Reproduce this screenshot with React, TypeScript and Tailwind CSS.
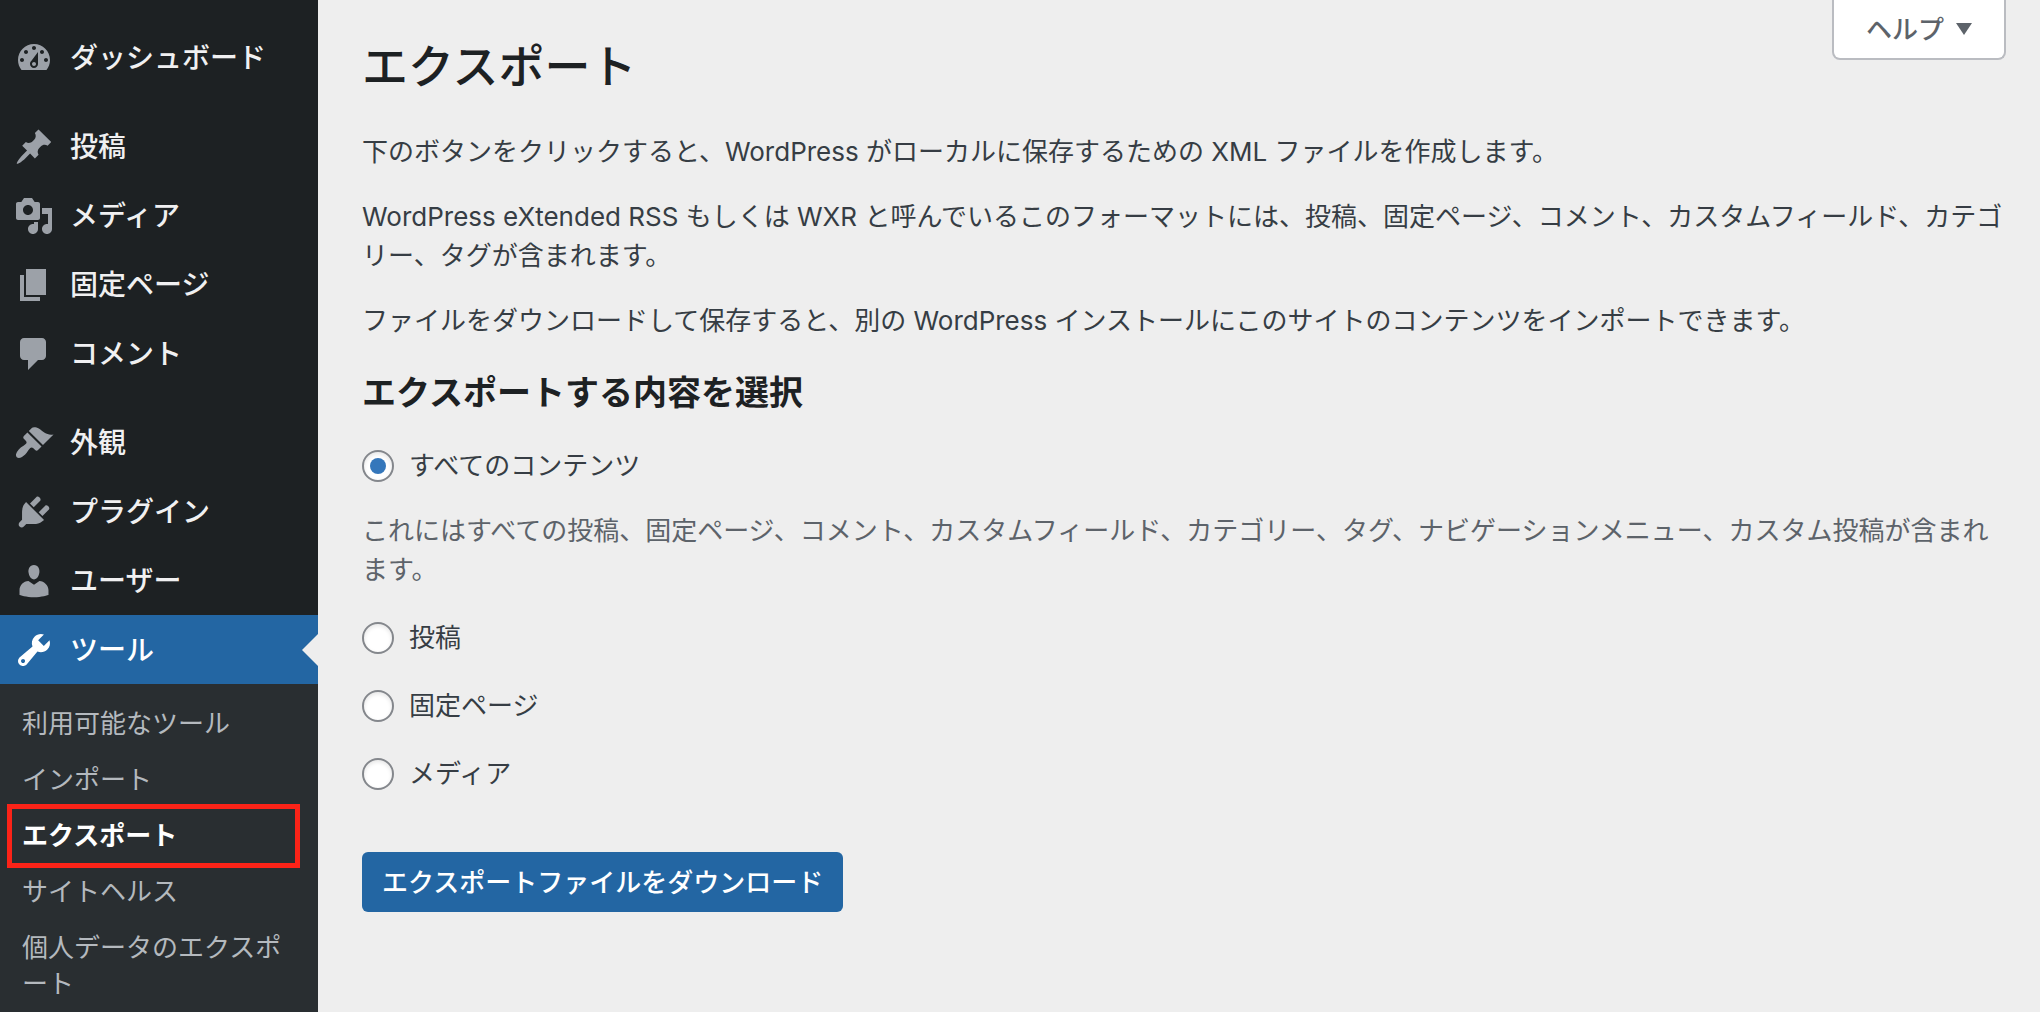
import { useState } from "react";

type MenuItem = { label: string; icon: string; current?: boolean };

const ICONS = {
  dashboard:
    "M3.76 16h12.48c1.1-1.37 1.76-3.11 1.76-5 0-4.42-3.58-8-8-8s-8 3.58-8 8c0 1.89.66 3.63 1.76 5zM10 4c.55 0 1 .45 1 1s-.45 1-1 1-1-.45-1-1 .45-1 1-1zM6 6c.55 0 1 .45 1 1s-.45 1-1 1-1-.45-1-1 .45-1 1-1zm8 0c.55 0 1 .45 1 1s-.45 1-1 1-1-.45-1-1 .45-1 1-1zm-5.37 5.55L12 7v6c0 1.1-.9 2-2 2s-2-.9-2-2c0-.57.24-1.08.63-1.45zM4 10c.55 0 1 .45 1 1s-.45 1-1 1-1-.45-1-1 .45-1 1-1zm12 0c.55 0 1 .45 1 1s-.45 1-1 1-1-.45-1-1 .45-1 1-1zm-5 3c0-.55-.45-1-1-1s-1 .45-1 1 .45 1 1 1 1-.45 1-1z",
  post: "M10.44 3.02l1.82-1.82 6.36 6.35-1.83 1.82c-1.05-.68-2.48-.57-3.41.36l-.75.75c-.92.93-1.04 2.35-.35 3.41l-1.83 1.82-2.41-2.41-2.8 2.79c-.42.42-3.38 2.71-3.8 2.29s1.86-3.39 2.28-3.81l2.79-2.79L4.1 9.36l1.83-1.82c1.05.69 2.48.57 3.4-.36l.75-.75c.93-.92 1.05-2.35.36-3.41z",
  media:
    "M13 11V4c0-.55-.45-1-1-1h-1.67L9 1H5L3.67 3H2c-.55 0-1 .45-1 1v7c0 .55.45 1 1 1h10c.55 0 1-.45 1-1zM7 4.5c1.38 0 2.5 1.12 2.5 2.5S8.38 9.5 7 9.5 4.5 8.38 4.5 7 5.62 4.5 7 4.5zM14 6h5v10.5c0 1.38-1.12 2.5-2.5 2.5S14 17.88 14 16.5s1.12-2.5 2.5-2.5c.17 0 .34.02.5.05V9h-3V6zm-4 8.05V13h2v3.5c0 1.38-1.12 2.5-2.5 2.5S7 17.88 7 16.5 8.12 14 9.5 14c.17 0 .34.02.5.05z",
  page: "M6 15V2h10v13H6zm-1 1h8v2H3V5h2v11z",
  comment: "M5 2h9c1.1 0 2 .9 2 2v7c0 1.1-.9 2-2 2h-2l-5 5v-5H5c-1.1 0-2-.9-2-2V4c0-1.1.9-2 2-2z",
  appearance:
    "M14.48 11.06L7.41 3.99l1.5-1.5c.5-.56 2.3-.47 3.51.32 1.21.8 1.43 1.28 2.91 2.1 1.18.64 2.45 1.26 4.45.85zm-.71.71L6.7 4.7 4.93 6.47c-.39.39-.39 1.02 0 1.41l1.06 1.06c.39.39.39 1.03 0 1.42-.6.6-1.43 1.11-2.21 1.69-.35.26-.7.53-1.01.84C1.43 14.23.4 16.08 1.4 17.07c.99 1 2.84-.03 4.18-1.36.31-.31.58-.66.85-1.02.57-.78 1.08-1.61 1.69-2.21.39-.39 1.02-.39 1.41 0l1.06 1.06c.39.39 1.02.39 1.41 0z",
  plugin:
    "M13.11 4.36L9.87 7.6 8 5.73l3.24-3.24c.35-.34 1.05-.2 1.56.32.52.51.66 1.21.31 1.55zm-8 1.77l.91-1.12 9.01 9.01-1.19.84c-.71.71-2.63 1.16-3.82 1.16H6.14L4.9 17.26c-.59.59-1.54.59-2.12 0-.59-.58-.59-1.53 0-2.12l1.24-1.24v-3.88c0-1.13.4-3.19 1.09-3.89zm7.26 3.97l3.24-3.24c.34-.35 1.04-.21 1.55.31.52.51.66 1.21.31 1.55l-3.24 3.25z",
  user: "M10 9.25c-2.27 0-2.73-3.44-2.73-3.44C7 4.02 7.82 2 9.97 2c2.16 0 2.98 2.02 2.71 3.81 0 0-.41 3.44-2.68 3.44zm0 2.57L12.72 10c2.39 0 4.52 2.33 4.52 4.53v2.49s-3.65 1.13-7.24 1.13c-3.65 0-7.24-1.13-7.24-1.13v-2.49c0-2.25 1.94-4.48 4.47-4.48z",
  tools:
    "M16.68 9.77c-1.34 1.34-3.3 1.67-4.95.99l-5.41 6.52c-.99.99-2.59.99-3.58 0s-.99-2.59 0-3.57l6.52-5.42c-.68-1.65-.35-3.61.99-4.95 1.28-1.28 3.12-1.62 4.72-1.06l-2.89 2.89 2.82 2.82 2.86-2.87c.53 1.58.18 3.39-1.08 4.65zM3.81 16.21c.4.39 1.04.39 1.43 0 .4-.4.4-1.04 0-1.43-.39-.4-1.03-.4-1.43 0-.39.39-.39 1.03 0 1.43z",
};

const MENU_GROUPS: MenuItem[][] = [
  [{ label: "ダッシュボード", icon: ICONS.dashboard }],
  [
    { label: "投稿", icon: ICONS.post },
    { label: "メディア", icon: ICONS.media },
    { label: "固定ページ", icon: ICONS.page },
    { label: "コメント", icon: ICONS.comment },
  ],
  [
    { label: "外観", icon: ICONS.appearance },
    { label: "プラグイン", icon: ICONS.plugin },
    { label: "ユーザー", icon: ICONS.user },
    { label: "ツール", icon: ICONS.tools, current: true },
  ],
];

const SUBMENU = [
  "利用可能なツール",
  "インポート",
  "エクスポート",
  "サイトヘルス",
  "個人データのエクスポート",
];

const CONTENT_TYPES = [
  {
    value: "all",
    label: "すべてのコンテンツ",
    description:
      "これにはすべての投稿、固定ページ、コメント、カスタムフィールド、カテゴリー、タグ、ナビゲーションメニュー、カスタム投稿が含まれます。",
  },
  { value: "posts", label: "投稿" },
  { value: "pages", label: "固定ページ" },
  { value: "media", label: "メディア" },
];

function MenuLink({ label, icon, current }: MenuItem) {
  return (
    <a
      href="#"
      className={`relative flex h-[69px] items-center pl-[14px] text-[28px] leading-9 font-medium ${
        current ? "bg-[#2366a3] text-white" : "text-[#f0f0f1]"
      }`}
    >
      <svg
        viewBox="0 0 20 20"
        className={`mr-4 size-10 shrink-0 ${current ? "fill-white" : "fill-[#9ca1a8]"}`}
        aria-hidden="true"
      >
        <path fillRule="evenodd" d={icon} />
      </svg>
      {label}
      {/* Notch pointing at the page */}
      {current && (
        <span className="absolute top-1/2 right-0 -translate-y-1/2 border-y-[16px] border-r-[16px] border-y-transparent border-r-[#eeeeee]" />
      )}
    </a>
  );
}

function Sidebar() {
  return (
    <nav className="w-[318px] shrink-0 bg-[#1d2123] pt-[23px]">
      <div className="flex flex-col gap-5">
        {MENU_GROUPS.map((group, i) => (
          <ul key={i}>
            {group.map((item) => (
              <li key={item.label}>
                <MenuLink {...item} />
              </li>
            ))}
          </ul>
        ))}
      </div>

      {/* Submenu of the current item */}
      <ul className="bg-[#292e31] pt-3 text-[26px] leading-9 text-[#b4b9be]">
        {SUBMENU.map((label) => {
          const current = label === "エクスポート";
          return (
            <li key={label} className="relative">
              <a
                href="#"
                className={`block py-[10px] pr-6 pl-[22px] break-all ${
                  current ? "font-bold text-white" : ""
                }`}
              >
                {label}
              </a>
              {current && (
                <span className="pointer-events-none absolute -inset-y-1 right-[18px] left-[7px] border-[5px] border-[#fb2318]" />
              )}
            </li>
          );
        })}
      </ul>
    </nav>
  );
}

function ExportForm() {
  const [content, setContent] = useState("all");

  return (
    <form onSubmit={(e) => e.preventDefault()}>
      <fieldset>
        <legend className="mb-7 text-[34px] leading-[48px] font-bold text-[#1d2123]">
          エクスポートする内容を選択
        </legend>
        <div className="flex flex-col gap-[26px]">
          {CONTENT_TYPES.map(({ value, label, description }) => (
            <div key={value}>
              <label className="flex h-[42px] w-fit items-center gap-[15px]">
                <input
                  type="radio"
                  name="content"
                  value={value}
                  checked={content === value}
                  onChange={() => setContent(value)}
                  className="grid size-8 appearance-none place-content-center rounded-full border-2 border-[#84878c] bg-white shadow-[inset_0_2px_4px_rgba(0,0,0,0.1)] before:size-4 before:rounded-full checked:before:bg-[#3577bb]"
                />
                <span className="pb-0.5">{label}</span>
              </label>
              {description && <p className="mt-6 mb-0.5 text-[#5d636a]">{description}</p>}
            </div>
          ))}
        </div>
      </fieldset>
      <button
        type="submit"
        className="mt-[57px] h-[60px] rounded-md bg-[#2366a3] px-5 font-medium text-white"
      >
        エクスポートファイルをダウンロード
      </button>
    </form>
  );
}

export default function App() {
  return (
    <div
      lang="ja"
      className="flex min-h-screen bg-[#eeeeee] font-['Inter','Noto_Sans_CJK_JP',sans-serif] text-[26px] leading-[39px] text-[#363d44]"
    >
      <Sidebar />

      <main className="relative min-w-0 flex-1 pt-9 pr-8 pb-10 pl-11">
        <button
          type="button"
          className="absolute top-0 right-[34px] flex h-[60px] items-center gap-3 rounded-b-lg border-2 border-t-0 border-[#babcc1] bg-white px-8 font-medium text-[#5d636a]"
        >
          ヘルプ
          <svg viewBox="0 0 16 12" className="h-3 w-4 fill-current" aria-hidden="true">
            <path d="M0 0h16L8 12z" />
          </svg>
        </button>

        <h1 className="text-[46px] leading-[60px] font-medium text-[#1d2123]">エクスポート</h1>
        <div className="mt-9 mb-[29px] flex flex-col gap-[26px]">
          <p>下のボタンをクリックすると、WordPress がローカルに保存するための XML ファイルを作成します。</p>
          <p>
            WordPress eXtended RSS もしくは WXR
            と呼んでいるこのフォーマットには、投稿、固定ページ、コメント、カスタムフィールド、カテゴリー、タグが含まれます。
          </p>
          <p>ファイルをダウンロードして保存すると、別の WordPress インストールにこのサイトのコンテンツをインポートできます。</p>
        </div>
        <ExportForm />
      </main>
    </div>
  );
}
